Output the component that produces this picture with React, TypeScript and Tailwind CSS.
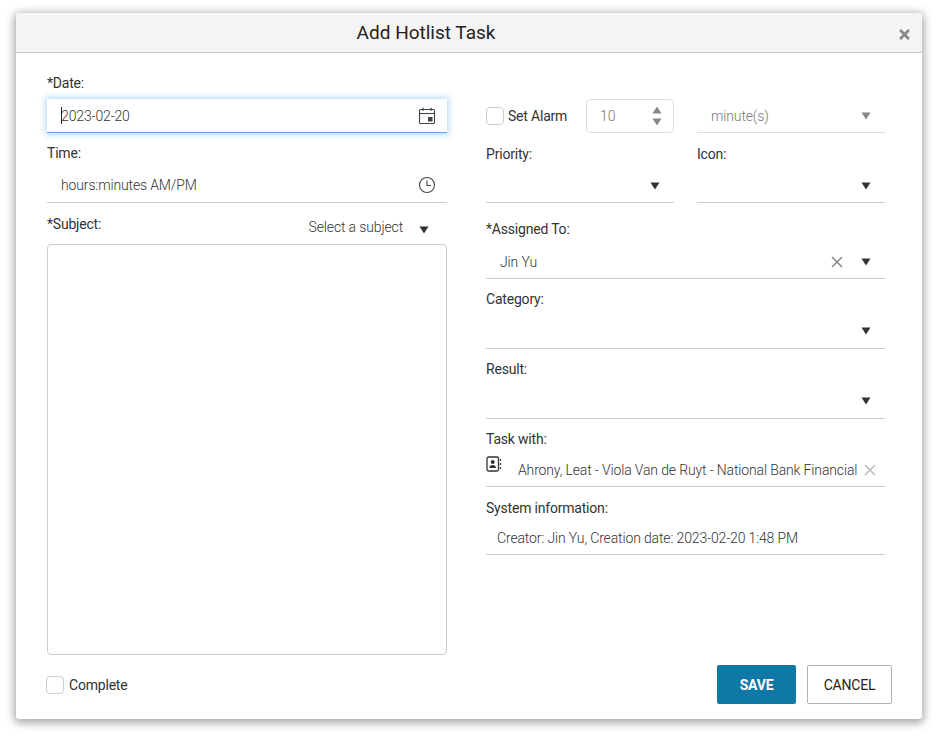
import React from 'react'
import { FaTimes } from 'react-icons/fa'

const valueText = 'text-sm leading-[20px] pt-[1px] font-light tracking-[-0.14px] text-[#333] whitespace-nowrap'
const labelText = 'text-sm leading-[21px] h-[20px] tracking-[-0.2px] text-[#333]'

function Caret({ className = 'text-[#333]' }: { className?: string }) {
  return (
    <svg width="10" height="8" viewBox="0 0 10 8" className={className}>
      <path d="M0.5 0.5h9L5 7.5z" fill="currentColor" />
    </svg>
  )
}

function Cross({ className }: { className: string }) {
  return (
    <svg width="12" height="12" viewBox="0 0 12 12" className={className}>
      <path d="M1 1l10 10M11 1L1 11" stroke="currentColor" strokeWidth="1.5" fill="none" />
    </svg>
  )
}

function Check() {
  return <span className="block w-[18px] h-[18px] rounded-[4px] border border-[#ccc] bg-white" />
}

function Label({ children, className = '' }: { children: React.ReactNode; className?: string }) {
  return <div className={`${labelText} ${className}`}>{children}</div>
}

function SelectLine({ h, pb = 'pb-[13px]' }: { h: string; pb?: string }) {
  return (
    <div className={`${h} ${pb} flex items-end justify-end pr-[14px] border-b border-[#ccc]`}>
      <Caret />
    </div>
  )
}

function App() {
  return (
    <div className="w-[938px] h-[736px] bg-white pt-[13px] pl-[16px] font-['Roboto',sans-serif]">
      <div className="relative w-[906px] h-[706px] bg-white rounded-[3px] shadow-[0_2px_8px_2px_rgba(0,0,0,0.35)] flex flex-col">
        <div className="h-[40px] shrink-0 flex items-center justify-center bg-[#f4f4f4] border-b border-[#ccc] rounded-t-[3px] pr-[86px]">
          <h1 className="text-[19px] leading-[26px] text-[#222]">Add Hotlist Task</h1>
        </div>
        <button className="absolute right-[10px] top-[14px] text-[#888]">
          <FaTimes size={15} />
        </button>

        <div className="flex-1 flex pl-[31px] pr-[37px] gap-[39px]">
          {/* Left column */}
          <div className="w-[400px] flex flex-col pt-[20px]">
            <Label>*Date:</Label>
            <div className="mt-[6px] h-[34px] flex items-center justify-between pl-[14px] pr-[11px] bg-white border-b border-[#5aa9ee] shadow-[0_0_6px_2px_rgba(90,169,238,0.4)]">
              <span className={`relative ${valueText}`}>
                <span className="absolute left-0 top-[2px] w-px h-[17px] bg-[#222]" />
                2023-02-20
              </span>
              <svg width="18" height="18" viewBox="0 0 18 18" fill="none" className="text-[#444]">
                <rect x="1.5" y="2.5" width="15" height="14" rx="1" stroke="currentColor" strokeWidth="1.1" />
                <path d="M1.5 6.5h15" stroke="currentColor" strokeWidth="1.1" />
                <path d="M5 0.8v3M13 0.8v3" stroke="currentColor" strokeWidth="1.3" />
                <rect x="10" y="10" width="4.5" height="4.5" fill="currentColor" />
              </svg>
            </div>
            <Label className="mt-[10px]">Time:</Label>
            <div className="mt-[3px] h-[37px] flex items-center justify-between pl-[14px] pr-[11px] border-b border-[#ccc]">
              <span className={valueText}>hours:minutes AM/PM</span>
              <svg width="18" height="18" viewBox="0 0 18 18" fill="none" className="text-[#444] mt-[2px]">
                <circle cx="9" cy="9" r="7.5" stroke="currentColor" strokeWidth="1.1" />
                <path d="M9 4.5V9.5h4" stroke="currentColor" strokeWidth="1.1" />
              </svg>
            </div>
            <div className="mt-[11px] h-[29px] flex justify-between">
              <Label>*Subject:</Label>
              <div className="flex items-start pr-[18px]">
                <span className={`${valueText} mt-[2px]`}>Select a subject</span>
                <Caret className="text-[#333] ml-[16px] mt-[12px]" />
              </div>
            </div>
            <textarea className="w-[400px] h-[411px] mt-[1px] rounded-[4px] border border-[#ccc] bg-white resize-none outline-none" />
            <label className="mt-[20px] flex items-center gap-[5px] -ml-[1px]">
              <Check />
              <span className={labelText}>Complete</span>
            </label>
          </div>

          {/* Right column */}
          <div className="w-[399px] flex flex-col pt-[46px]">
            <div className="h-[34px] flex items-stretch">
              <label className="w-[100px] flex items-center gap-[4px]">
                <Check />
                <span className={labelText}>Set Alarm</span>
              </label>
              <div className="w-[88px] flex items-center justify-between pl-[13px] pr-[11px] rounded-[4px] border border-[#ddd]">
                <span className="text-sm font-light text-[#777]">10</span>
                <div className="flex flex-col gap-[4px]">
                  <Caret className="rotate-180 text-[#888]" />
                  <Caret className="text-[#888]" />
                </div>
              </div>
              <div className="w-[188px] ml-[23px] flex items-center justify-between px-[14px] border-b border-[#ddd]">
                <span className="text-sm font-light tracking-[-0.14px] text-[#777]">minute(s)</span>
                <Caret className="text-[#888]" />
              </div>
            </div>

            <div className="mt-[11px] flex gap-[23px]">
              <div className="w-[188px]">
                <Label>Priority:</Label>
                <SelectLine h="h-[39px]" pb="pb-[12px]" />
              </div>
              <div className="w-[188px]">
                <Label>Icon:</Label>
                <SelectLine h="h-[39px]" pb="pb-[12px]" />
              </div>
            </div>

            <Label className="mt-[16px]">*Assigned To:</Label>
            <div className="h-[40px] flex items-center pt-[5px] px-[14px] border-b border-[#ccc]">
              <span className={`flex-1 ${valueText}`}>Jin Yu</span>
              <Cross className="text-[#888] mr-[18px] mt-[2px]" />
              <Caret className="text-[#333] mt-[1px]" />
            </div>

            <Label className="mt-[10px]">Category:</Label>
            <SelectLine h="h-[40px]" />

            <Label className="mt-[10px]">Result:</Label>
            <SelectLine h="h-[40px]" />

            <Label className="mt-[10px]">Task with:</Label>
            <div className="h-[38px] relative flex items-center pl-[32px] pr-[9px] border-b border-[#ccc] pt-[4px]">
              <svg width="16" height="16" viewBox="0 0 16 16" fill="none" className="absolute left-0 top-[7px] text-[#333]">
                <rect x="1" y="1" width="11.5" height="14" rx="1.5" stroke="currentColor" strokeWidth="1.3" />
                <circle cx="6.7" cy="6" r="2" fill="currentColor" />
                <path d="M3.5 12c0-2.4 1.5-3 3.2-3s3.2.6 3.2 3z" fill="currentColor" />
                <path d="M14.5 3v2M14.5 7v2M14.5 11v2" stroke="currentColor" strokeWidth="1.2" />
              </svg>
              <span className={`flex-1 ${valueText}`}>Ahrony, Leat - Viola Van de Ruyt - National Bank Financial</span>
              <Cross className="text-[#bbb]" />
            </div>

            <Label className="mt-[11px]">System information:</Label>
            <div className="h-[37px] flex items-center pt-[3px] pl-[11px] border-b border-[#ccc]">
              <span className={valueText}>Creator: Jin Yu, Creation date: 2023-02-20 1:48 PM</span>
            </div>
          </div>
        </div>

        <div className="absolute right-[30px] bottom-[15px] flex gap-[11px]">
          <button className="w-[79px] h-[39px] rounded-[2px] bg-[#0f78a6] text-white text-sm font-bold tracking-[-0.2px]">SAVE</button>
          <button className="w-[85px] h-[39px] rounded-[2px] border border-[#a9b4bf] bg-white text-sm tracking-[-0.2px] text-[#222]">CANCEL</button>
        </div>
      </div>
    </div>
  )
}

export default App
